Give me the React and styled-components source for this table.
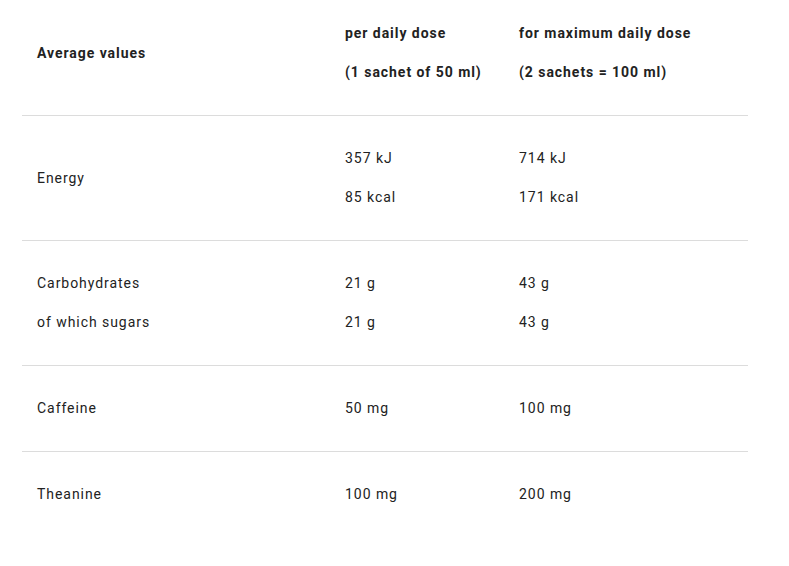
import styled, { createGlobalStyle } from 'styled-components';

const Global = createGlobalStyle`
	body {
		margin: 0;
		background: #fff;
		font-family: Roboto, "Liberation Sans", sans-serif;
		color: #222;
	}
`;

const Table = styled.div`
	width: 726px;
	margin-left: 22px;
	margin-top: -9px;
`;

const Row = styled.div`
	display: grid;
	grid-template-columns: 308px 174px 244px;
	align-items: center;
	border-bottom: ${(p) => (p.last ? 'none' : '1px solid #dcdcdc')};
`;

const Cell = styled.div`
	padding: 23px 15px;
	font-size: 14px;
	line-height: 39px;
	letter-spacing: 0.95px;
	font-weight: ${(p) => (p.bold ? 700 : 400)};
	white-space: nowrap;
`;

const Line = styled.div``;

const rows = [
	{
		bold: true,
		cells: [['Average values'], ['per daily dose', '(1 sachet of 50 ml)'], ['for maximum daily dose', '(2 sachets = 100 ml)']],
	},
	{ cells: [['Energy'], ['357 kJ', '85 kcal'], ['714 kJ', '171 kcal']] },
	{ cells: [['Carbohydrates', 'of which sugars'], ['21 g', '21 g'], ['43 g', '43 g']] },
	{ cells: [['Caffeine'], ['50 mg'], ['100 mg']] },
	{ cells: [['Theanine'], ['100 mg'], ['200 mg']] },
];

export default function App() {
	return (
		<>
			<Global />
			<Table>
				{rows.map((row, i) => (
					<Row key={i} last={i === rows.length - 1}>
						{row.cells.map((lines, j) => (
							<Cell key={j} bold={row.bold}>
								{lines.map((t) => (
									<Line key={t}>{t}</Line>
								))}
							</Cell>
						))}
					</Row>
				))}
			</Table>
		</>
	);
}
